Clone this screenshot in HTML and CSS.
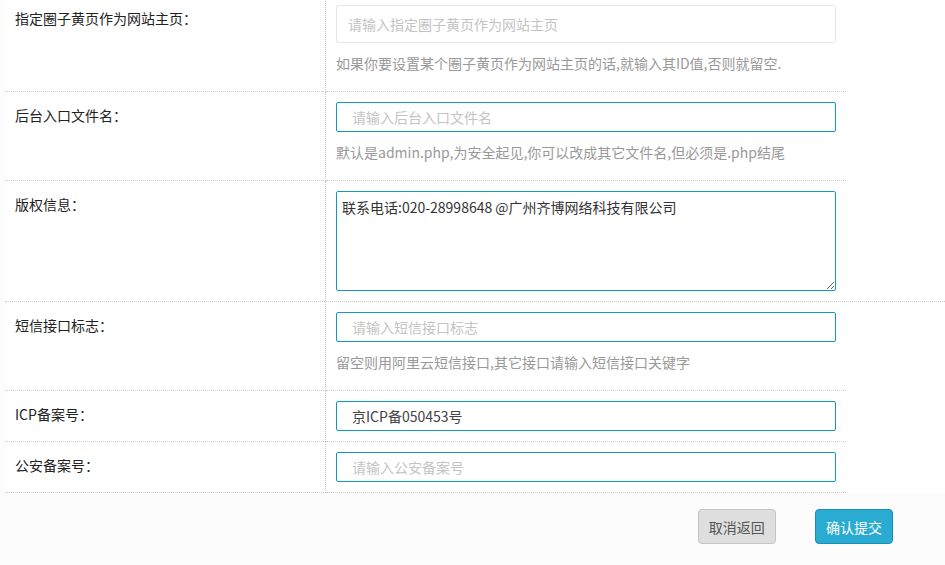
FILE: index.html
```html
<!DOCTYPE html>
<html lang="zh-CN">

<head>
    <meta charset="UTF-8">
    <meta name="viewport" content="width=device-width, initial-scale=1.0">
    <title>系统设置</title>
    <link rel="stylesheet" href="styles.css">
</head>

<body>
    <!-- 设置表单 -->
    <div class="form">
        <div class="row">
            <div class="label">指定圈子黄页作为网站主页：</div>
            <div class="field">
                <input type="text" class="input input-plain" placeholder="请输入指定圈子黄页作为网站主页">
                <div class="hint">如果你要设置某个圈子黄页作为网站主页的话,就输入其ID值,否则就留空.</div>
            </div>
        </div>

        <div class="row">
            <div class="label">后台入口文件名：</div>
            <div class="field">
                <input type="text" class="input" placeholder="请输入后台入口文件名">
                <div class="hint">默认是admin.php,为安全起见,你可以改成其它文件名,但必须是.php结尾</div>
            </div>
        </div>

        <div class="row row-wide">
            <div class="label">版权信息：</div>
            <div class="field">
                <textarea class="textarea">联系电话:020-28998648 @广州齐博网络科技有限公司</textarea>
            </div>
        </div>

        <div class="row">
            <div class="label">短信接口标志：</div>
            <div class="field">
                <input type="text" class="input" placeholder="请输入短信接口标志">
                <div class="hint">留空则用阿里云短信接口,其它接口请输入短信接口关键字</div>
            </div>
        </div>

        <div class="row">
            <div class="label">ICP备案号：</div>
            <div class="field">
                <input type="text" class="input" value="京ICP备050453号">
            </div>
        </div>

        <div class="row">
            <div class="label">公安备案号：</div>
            <div class="field">
                <input type="text" class="input" placeholder="请输入公安备案号">
            </div>
        </div>
    </div>

    <!-- 底部按钮 -->
    <div class="footer">
        <button class="btn btn-cancel">取消返回</button>
        <button class="btn btn-submit">确认提交</button>
    </div>
</body>

</html>
```

FILE: styles.css
```css
/* Base styles */
body {
    margin: 0;
    padding: 0;
    background-color: #fcfcfc;
    font-family: "Noto Sans CJK SC", "Liberation Sans", sans-serif;
    font-size: 14px;
    color: #222;
}

/* Form table */
.form {
    width: 940px;
    margin: -5px 0 0 5px;
    background-color: #fff;
}

.row {
    display: flex;
}

.label {
    width: 310px;
    padding: 13px 0 0 10px;
    line-height: 20px;
    border-right: 1px dotted #c8c8c8;
    border-bottom: 1px dotted #c8c8c8;
}

.field {
    width: 500px;
    padding: 10px;
    border-bottom: 1px dotted #c8c8c8;
}

/* The copyright row's line runs to the page edge */
.row-wide {
    border-bottom: 1px dotted #c8c8c8;
}

.row-wide .label,
.row-wide .field {
    border-bottom: none;
}

/* Inputs */
.input {
    display: block;
    width: 500px;
    height: 30px;
    padding: 0 15px;
    box-sizing: border-box;
    border: 1px solid #1398c3;
    border-radius: 2px;
    font-family: inherit;
    font-size: 14px;
    color: #444;
    outline: none;
}

.input-plain {
    height: 38px;
    padding: 0 11px;
    border-color: #e6e6e6;
}

.input::placeholder {
    color: #c4c4c4;
}

.textarea {
    display: block;
    width: 500px;
    height: 100px;
    padding: 5px;
    box-sizing: border-box;
    border: 1px solid #1398c3;
    border-radius: 2px;
    font-family: inherit;
    font-size: 14px;
    line-height: 20px;
    color: #333;
    outline: none;
}

.hint {
    margin: 10px 0 8px;
    line-height: 20px;
    color: #999;
}

/* Footer buttons */
.footer {
    height: 72px;
    padding: 16px 52px 0 0;
    box-sizing: border-box;
    text-align: right;
}

.btn {
    width: 78px;
    height: 35px;
    border-radius: 4px;
    font-family: inherit;
    font-size: 14px;
    cursor: pointer;
}

.btn-cancel {
    margin-right: 36px;
    background-color: #dedede;
    border: 1px solid #c4c4c4;
    color: #555;
}

.btn-submit {
    background-color: #2aabd2;
    border: 1px solid #1b8db5;
    color: #fff;
}
```
